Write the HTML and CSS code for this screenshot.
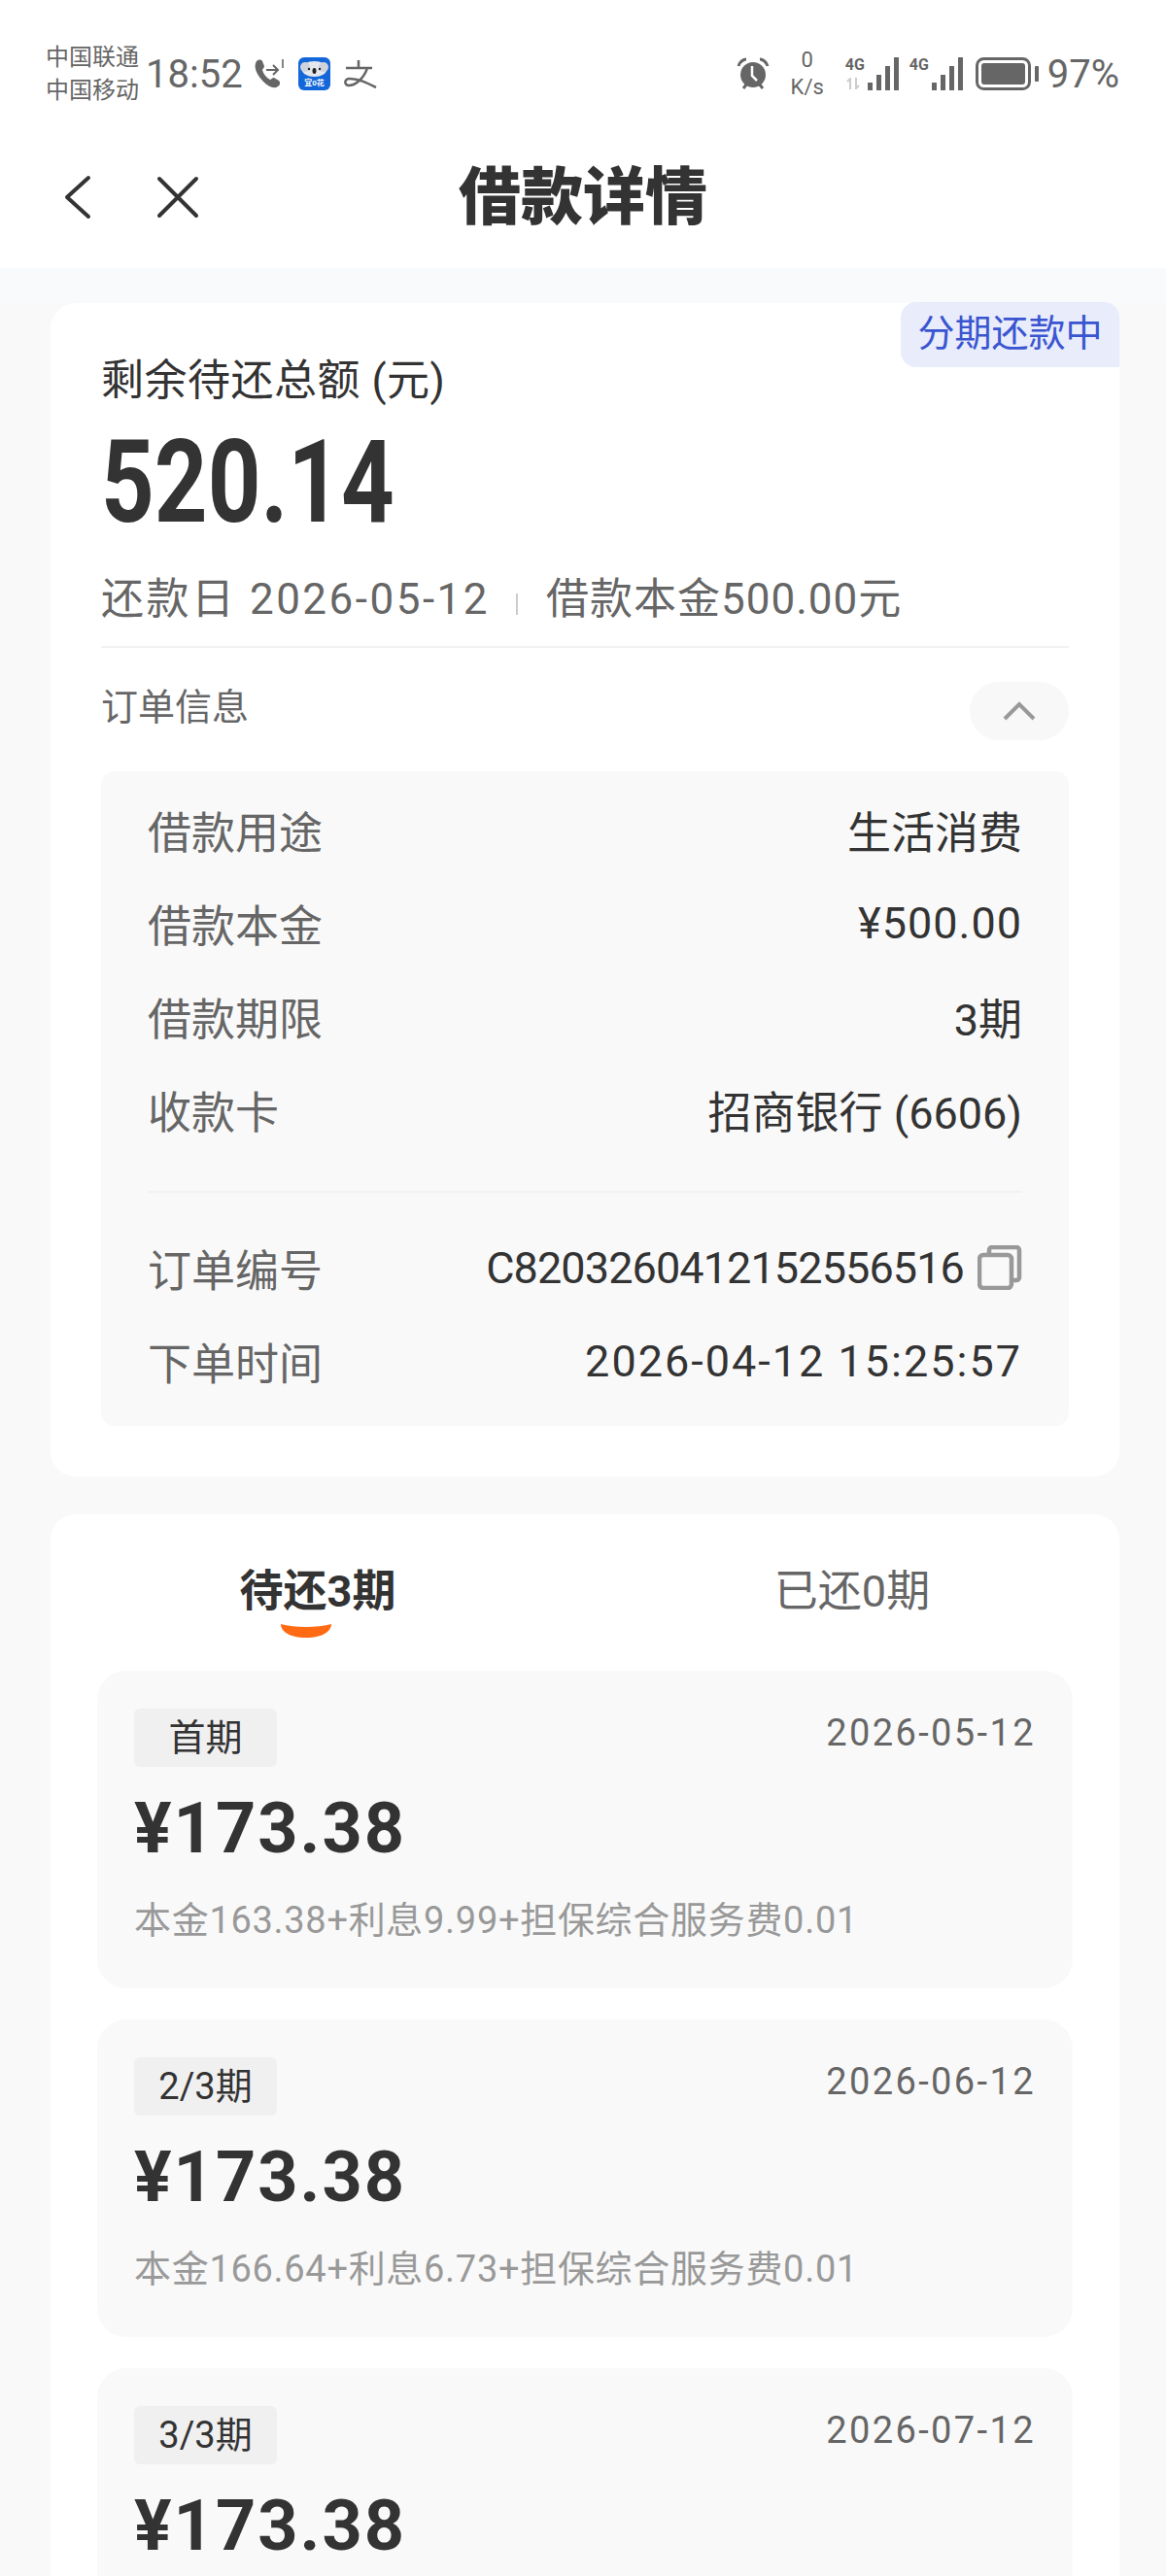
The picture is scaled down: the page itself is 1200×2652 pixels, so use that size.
FILE: index.html
```html
<!DOCTYPE html>
<html>
<head>
    <title>借款详情</title>
    <link rel="stylesheet" href="styles.css">
</head>
<body>
    <div class="status-bar">
        <div class="status-left">
            <div class="carrier"><div>中国联通</div><div>中国移动</div></div>
            <span class="clock">18:52</span>
            <svg class="ic-phone" width="34" height="34" viewBox="0 0 34 34">
                <path d="M4 4c2-2 5-2 6 0l2 5c0 2-2 3-2 4 1 4 4 8 8 10 1 0 2-2 4-2l5 3c2 2 1 5-1 6-4 3-10 0-15-5C5 19 0 10 4 4z" fill="#666"/>
                <path d="M14 13h12M21 8l5 5-5 5" fill="none" stroke="#666" stroke-width="2"/>
                <path d="M31 2v9" stroke="#666" stroke-width="1.6"/>
            </svg>
            <svg class="ic-app" width="33" height="34" viewBox="0 0 33 34">
                <rect width="33" height="34" rx="6" fill="#1467d8"/>
                <ellipse cx="16.500" cy="12" rx="13" ry="8" fill="#e6e8ee"/>
                <circle cx="7" cy="10" r="5" fill="#cfd3dc"/>
                <circle cx="26" cy="10" r="5" fill="#cfd3dc"/>
                <ellipse cx="16.500" cy="14" rx="2" ry="3" fill="#222"/>
                <circle cx="11" cy="12" r="1.200" fill="#222"/>
                <circle cx="22" cy="12" r="1.200" fill="#222"/>
                <text x="16.500" y="29" class="app-text" text-anchor="middle">宜0花</text>
            </svg>
            <svg class="ic-pay" width="35" height="30" viewBox="0 0 35 30">
                <path d="M3 9h27M16 1v8M25 9c-3 10-12 18-19 18-5 0-5-7 1-7 9 0 17 4 27 9" fill="none" stroke="#666" stroke-width="2.600"/>
            </svg>
        </div>
        <div class="status-right">
            <svg width="34" height="34" viewBox="0 0 34 34">
                <circle cx="17" cy="18" r="13" fill="#666"/>
                <path d="M2 9c1-4 5-7 8-7M32 9c-1-4-5-7-8-7" fill="none" stroke="#666" stroke-width="3"/>
                <path d="M7 32l4-5M27 32l-4-5" stroke="#666" stroke-width="3"/>
                <path d="M16 9v10l5 5" fill="none" stroke="#fff" stroke-width="2.500"/>
            </svg>
            <div class="speed"><div>0</div><div>K/s</div></div>
            <div class="signal">
                <span class="net">4G</span>
                <svg class="arrows" width="14" height="12" viewBox="0 0 14 12"><path d="M4 12V1L1 4M10 0v11l3-3" fill="none" stroke="#ccc" stroke-width="2"/></svg>
                <div class="bars"><i class="b1"></i><i class="b2"></i><i class="b3"></i><i class="b4"></i></div>
            </div>
            <div class="signal signal-2">
                <span class="net">4G</span>
                <div class="bars"><i class="b1"></i><i class="b2"></i><i class="b3"></i><i class="b4"></i></div>
            </div>
            <svg width="66" height="34" viewBox="0 0 66 34">
                <rect x="1.500" y="1.500" width="54" height="31" rx="7" fill="none" stroke="#666" stroke-width="3"/>
                <rect x="6" y="6" width="45" height="22" rx="3" fill="#666"/>
                <rect x="61" y="9" width="4" height="16" rx="1" fill="#666"/>
            </svg>
            <span class="battery">97%</span>
        </div>
    </div>

    <div class="nav-bar">
        <svg class="nav-back" width="30" height="46" viewBox="0 0 30 46"><path d="M26 3L4 23l22 20" fill="none" stroke="#333" stroke-width="4" stroke-linecap="round" stroke-linejoin="round"/></svg>
        <svg class="nav-close" width="44" height="44" viewBox="0 0 44 44"><path d="M3 3l38 38M41 3L3 41" fill="none" stroke="#333" stroke-width="4" stroke-linecap="round"/></svg>
        <h1 class="nav-title">借款详情</h1>
    </div>

    <div class="page">
        <div class="card summary">
            <div class="state-tag">分期还款中</div>
            <div class="total-label">剩余待还总额 (元)</div>
            <div class="total-amount"><span>520.14</span></div>
            <div class="due-line">
                <span class="due-date">还款日 2026-05-12</span>
                <i class="due-sep"></i>
                <span class="due-money">借款本金500.00元</span>
            </div>
            <div class="order-head">
                <span>订单信息</span>
                <div class="toggle">
                    <svg width="34" height="20" viewBox="0 0 34 20"><path d="M2 18L17 3l15 15" fill="none" stroke="#999" stroke-width="4"/></svg>
                </div>
            </div>
            <div class="order-panel">
                <div class="row"><span class="row-label">借款用途</span><span>生活消费</span></div>
                <div class="row"><span class="row-label">借款本金</span><span class="row-money">¥500.00</span></div>
                <div class="row"><span class="row-label">借款期限</span><span>3期</span></div>
                <div class="row"><span class="row-label">收款卡</span><span>招商银行 (6606)</span></div>
                <div class="panel-line"></div>
                <div class="row">
                    <span class="row-label">订单编号</span>
                    <span class="order-no">C8203260412152556516
                        <svg width="46" height="46" viewBox="0 0 46 46">
                            <path d="M12 8V5a3 3 0 0 1 3-3h25a3 3 0 0 1 3 3v28a3 3 0 0 1-3 3h-3" fill="none" stroke="#999" stroke-width="4.500"/>
                            <rect x="2" y="10" width="33" height="34" rx="4" fill="none" stroke="#999" stroke-width="4.500"/>
                        </svg>
                    </span>
                </div>
                <div class="row"><span class="row-label">下单时间</span><span class="order-time">2026-04-12 15:25:57</span></div>
            </div>
        </div>

        <div class="card plans">
            <div class="tabs">
                <div class="tab tab-on">待还3期
                    <svg class="tab-mark" width="52" height="14" viewBox="0 0 52 14"><path d="M0 0c14 4 38 4 52 0 0 8-10 14-26 14S0 8 0 0z" fill="#ff6a13"/></svg>
                </div>
                <div class="tab">已还0期</div>
            </div>
            <div class="plan">
                <div class="plan-top"><span class="plan-tag">首期</span><span class="plan-date">2026-05-12</span></div>
                <div class="plan-amount">¥173.38</div>
                <div class="plan-note">本金163.38+利息9.99+担保综合服务费0.01</div>
            </div>
            <div class="plan">
                <div class="plan-top"><span class="plan-tag">2/3期</span><span class="plan-date">2026-06-12</span></div>
                <div class="plan-amount">¥173.38</div>
                <div class="plan-note">本金166.64+利息6.73+担保综合服务费0.01</div>
            </div>
            <div class="plan">
                <div class="plan-top"><span class="plan-tag">3/3期</span><span class="plan-date">2026-07-12</span></div>
                <div class="plan-amount">¥173.38</div>
            </div>
        </div>
    </div>
</body>
</html>
```
FILE: styles.css
```css
* {
    box-sizing: border-box;
}
html, body {
    margin: 0;
    height: 2652px;
    overflow: hidden;
}
body {
    font-family: Roboto, "Noto Sans CJK SC", sans-serif;
    background: #f9f9f9;
    color: #333;
}
.status-bar {
    height: 138px;
    background: white;
    padding: 46px 48px 0 47px;
    display: flex;
    justify-content: space-between;
    align-items: flex-start;
    color: #666;
}
.status-left, .status-right {
    display: flex;
    align-items: center;
    height: 60px;
}
.carrier {
    font-size: 24px;
    line-height: 34px;
    width: 103px;
}
.clock {
    font-size: 40px;
    width: 110px;
}
.ic-app {
    margin-left: 13px;
}
.app-text {
    font-size: 8px;
    font-weight: bold;
    fill: white;
}
.ic-pay {
    margin-left: 13px;
}
.status-right svg {
    flex: none;
}
.speed {
    width: 40px;
    margin: 0 19px;
    font-size: 22px;
    line-height: 28px;
    text-align: center;
}
.signal {
    position: relative;
    width: 55px;
    height: 34px;
    margin-right: 11px;
}
.signal-2 {
    margin-right: 13px;
}
.net {
    position: absolute;
    left: 0;
    top: -2px;
    font-size: 16px;
    font-weight: bold;
    line-height: 20px;
}
.arrows {
    position: absolute;
    left: 1px;
    top: 21px;
}
.bars {
    position: absolute;
    right: 0;
    bottom: 0;
    display: flex;
    align-items: flex-end;
    gap: 4px;
}
.bars i {
    display: block;
    width: 5px;
    background: #666;
}
.b1 { height: 8px; }
.b2 { height: 16px; }
.b3 { height: 25px; }
.b4 { height: 34px; }
.battery {
    font-size: 40px;
    margin-left: 8px;
}
.nav-bar {
    height: 138px;
    background: white;
    display: flex;
    align-items: center;
    position: relative;
    padding: 0 0 8px 65px;
}
.nav-close {
    margin-left: 66px;
}
.nav-title {
    position: absolute;
    left: 0;
    right: 0;
    margin: -12px 0 0;
    text-align: center;
    font-size: 64px;
    font-weight: 900;
}
.page {
    padding: 36px 48px 0 52px;
    background: linear-gradient(#f9fafc, #f9fafc 36px, #f9f9f9 36px);
}
.card {
    position: relative;
    background: white;
    border-radius: 26px;
}
.summary {
    height: 1208px;
    padding: 0 52px;
}
.state-tag {
    position: absolute;
    right: 0;
    top: -1px;
    width: 225px;
    height: 67px;
    line-height: 64px;
    text-align: center;
    font-size: 38px;
    color: #3a55d0;
    background: #e8ecfb;
    border-radius: 16px 16px 0 16px;
}
.total-label {
    padding-top: 52px;
    font-size: 44px;
    line-height: 56px;
    letter-spacing: 0.5px;
}
.total-amount {
    margin-top: 12px;
    font-size: 118px;
    font-weight: bold;
    line-height: 130px;
}
.total-amount span {
    display: inline-block;
    transform: scaleX(0.81);
    transform-origin: left;
}
.due-line {
    margin-top: 25px;
    height: 80px;
    line-height: 60px;
    font-size: 44px;
    color: #666;
    display: flex;
    align-items: flex-start;
    border-bottom: 2px solid #f2f2f2;
}
.due-date {
    letter-spacing: 2.5px;
}
.due-money {
    letter-spacing: 1px;
}
.due-sep {
    width: 2px;
    height: 22px;
    margin: 24px 29px 0 27px;
    background: #ccc;
}
.order-head {
    height: 127px;
    padding-top: 35px;
    display: flex;
    justify-content: space-between;
    align-items: flex-start;
    font-size: 38px;
    line-height: 52px;
    color: #666;
}
.toggle {
    width: 102px;
    height: 60px;
    border-radius: 30px;
    background: #f8f8f8;
    display: flex;
    align-items: center;
    justify-content: center;
}
.order-panel {
    background: #f9f9f9;
    border-radius: 14px;
    padding: 12px 48px 19px;
    font-size: 45px;
}
.row {
    height: 96px;
    display: flex;
    justify-content: space-between;
    align-items: center;
}
.row-label {
    color: #666;
}
.row-money {
    letter-spacing: 1px;
}
.panel-line {
    height: 2px;
    margin: 36px 0 29px;
    background: #f2f2f2;
}
.order-no {
    display: flex;
    align-items: center;
    gap: 14px;
    letter-spacing: -0.9px;
}
.order-time {
    letter-spacing: 2px;
}
.plans {
    margin-top: 39px;
    padding: 0 48px;
    height: 1200px;
}
.tabs {
    display: flex;
    height: 161px;
    margin: 0 -48px;
}
.tab {
    flex: 1;
    padding-top: 50px;
    text-align: center;
    font-size: 45px;
    line-height: 60px;
    color: #666;
    position: relative;
}
.tab-on {
    font-weight: bold;
    color: #333;
}
.tab-mark {
    position: absolute;
    left: 237px;
    top: 113px;
}
.plan {
    height: 327px;
    margin-bottom: 32px;
    padding: 39px 38px 0;
    background: #f9f9f9;
    border-radius: 30px;
}
.plan-top {
    display: flex;
    justify-content: space-between;
    align-items: flex-start;
}
.plan-tag {
    width: 147px;
    height: 60px;
    line-height: 60px;
    text-align: center;
    font-size: 38px;
    background: #f0f0f0;
    border-radius: 6px;
}
.plan-date {
    font-size: 38px;
    line-height: 50px;
    color: #666;
    letter-spacing: 2.4px;
}
.plan-amount {
    margin-top: 19px;
    font-size: 72px;
    font-weight: bold;
    line-height: 90px;
    letter-spacing: 2px;
}
.plan-note {
    margin-top: 24px;
    font-size: 38px;
    line-height: 50px;
    color: #999;
    letter-spacing: 0.7px;
}
```
